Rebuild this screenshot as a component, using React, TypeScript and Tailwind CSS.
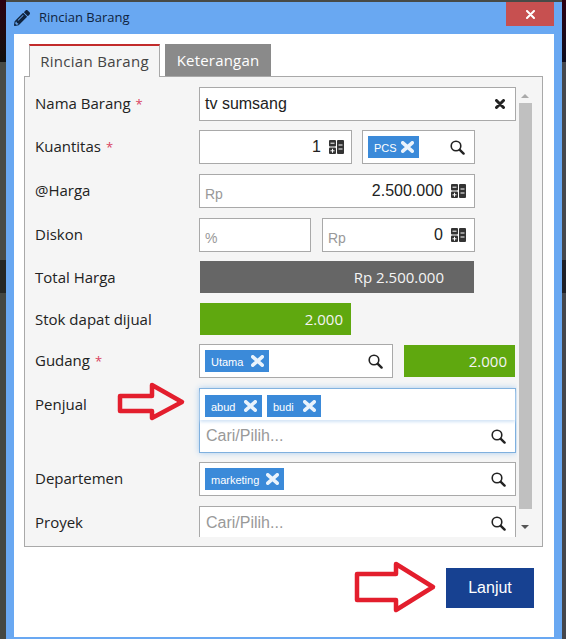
import React from "react";
import { FaPencilAlt } from "react-icons/fa";

const BOX = "h-[34px] border border-[#a9a9a9] bg-white flex items-center";

function Calc() {
  return (
    <svg width="15" height="14" viewBox="0 0 15 14" className="shrink-0">
      <rect x="0" y="0" width="7" height="6.5" rx="1" fill="#333" />
      <rect x="0" y="7.5" width="7" height="6.5" rx="1" fill="#333" />
      <rect x="8" y="0" width="7" height="14" rx="1" fill="#333" />
      <path d="M1.5 3.2h4M1.5 10.8h4M3.5 8.8v4M9.5 5h4M9.5 9h4" stroke="#fff" strokeWidth="1" />
    </svg>
  );
}

function Search() {
  return (
    <svg width="15" height="15" viewBox="0 0 15 15" className="shrink-0">
      <circle cx="6" cy="6" r="4.8" fill="none" stroke="#222" strokeWidth="1.6" />
      <path d="M9.8 9.8 13.6 13.6" stroke="#222" strokeWidth="2.4" strokeLinecap="round" />
    </svg>
  );
}

function Cross({ w, h, sw, color }: { w: number; h: number; sw: number; color: string }) {
  return (
    <svg width={w} height={h} viewBox={`0 0 ${w} ${h}`} className="shrink-0">
      <path d={`M${sw / 2} ${sw / 2}L${w - sw / 2} ${h - sw / 2}M${w - sw / 2} ${sw / 2}L${sw / 2} ${h - sw / 2}`} stroke={color} strokeWidth={sw} strokeLinecap="round" />
    </svg>
  );
}

function Tag({ children, className = "" }: { children: React.ReactNode; className?: string }) {
  return (
    <span className={`h-[22px] bg-[#3b8ad9] text-white text-[11px] flex items-center justify-between pl-[6px] pr-[5px] ${className}`}>
      <span className="pt-[2px]">{children}</span>
      <Cross w={13} h={12} sw={3.6} color="#eaf3fc" />
    </span>
  );
}

function Label({ children, req }: { children: React.ReactNode; req?: boolean }) {
  return (
    <div className="w-[174px] shrink-0 pl-[10px] font-['Open_Sans',sans-serif] text-[15px] leading-[32px] text-[#222]">
      {children}
      {req && <span className="text-[#d9435f] text-[13px] ml-[5px]">*</span>}
    </div>
  );
}

export default function App() {
  return (
    <div className="relative w-[566px] h-[639px] overflow-hidden bg-[#474a47] font-['Liberation_Sans',Arial,sans-serif] flex">
      {/* page behind the dialog */}
      <div className="w-[6px] shrink-0 flex flex-col">
        <div className="h-[62px] bg-gradient-to-b from-[#2c0012] to-[#101010]" />
        <div className="h-[198px] bg-[#484b47]" />
        <div className="h-[33px] bg-[#252725]" />
        <div className="flex-1 bg-[#444742]" />
      </div>

      <div className="w-[556px] shrink-0 mt-[2px] bg-[#69a8f2] px-[8px] pb-[2px] flex flex-col">
        {/* title bar */}
        <div className="h-[32px] shrink-0 flex items-start justify-between">
          <div className="flex items-center h-[32px] gap-[9px]">
            <FaPencilAlt className="w-[16px] h-[16px] text-[#10243f]" />
            <span className="font-['Open_Sans',sans-serif] text-[13px] text-[#10243f]">Rincian Barang</span>
          </div>
          <div className="w-[48px] h-[24px] bg-[#c75050] flex items-center justify-center">
            <Cross w={9} h={9} sw={2} color="#fff" />
          </div>
        </div>

        <div className="flex-1 bg-white pt-[10px] px-[10px] flex flex-col">
          {/* tabs */}
          <div className="flex pl-[5px] gap-[5px] items-start h-[33px] relative z-10 font-['Open_Sans',sans-serif] text-[15px]">
            <div className="w-[131px] h-[33px] bg-[#f5f5f5] border border-[#a9a9a9] border-b-0 border-t-2 border-t-[#c22b2b] flex items-center justify-center text-[#444] tracking-[0.3px]">
              Rincian Barang
            </div>
            <div className="w-[106px] h-[32px] bg-[#8a8a8a] flex items-center justify-center text-white font-medium tracking-[0.2px]">
              Keterangan
            </div>
          </div>

          {/* panel */}
          <div className="w-[519px] h-[471px] -mt-[1px] border border-[#a9a9a9] bg-[#f5f5f5] flex">
            <div className="w-[492px] h-[460px] overflow-hidden pt-[10px] flex flex-col">
              <div className="flex">
                <Label req>Nama Barang</Label>
                <div className={`${BOX} w-[317px] pl-[5px] pr-[10px] justify-between text-[16px] text-[#222]`}>
                  tv sumsang
                  <Cross w={10} h={10} sw={3} color="#222" />
                </div>
              </div>

              <div className="flex mt-[9px]">
                <Label req>Kuantitas</Label>
                <div className={`${BOX} w-[153px] pr-[7px] justify-end gap-[8px] text-[16px] text-[#222]`}>
                  1<Calc />
                </div>
                <div className={`${BOX} w-[113px] ml-[10px] pl-[5px] pr-[9px] justify-between`}>
                  <Tag className="w-[51px]">PCS</Tag>
                  <Search />
                </div>
              </div>

              <div className="flex mt-[10px]">
                <Label>@Harga</Label>
                <div className={`${BOX} w-[276px] pl-[5px] pr-[8px] justify-between text-[16px] text-[#222]`}>
                  <span className="text-[14px] text-[#999] pt-[6px]">Rp</span>
                  <span className="flex items-center gap-[8px]">2.500.000<Calc /></span>
                </div>
              </div>

              <div className="flex mt-[10px]">
                <Label>Diskon</Label>
                <div className={`${BOX} w-[112px] pl-[5px] text-[14px] text-[#999]`}>
                  <span className="pt-[6px]">%</span>
                </div>
                <div className={`${BOX} w-[153px] ml-[11px] pl-[5px] pr-[8px] justify-between text-[16px] text-[#222]`}>
                  <span className="text-[14px] text-[#999] pt-[6px]">Rp</span>
                  <span className="flex items-center gap-[8px]">0<Calc /></span>
                </div>
              </div>

              <div className="flex mt-[9px]">
                <Label>Total Harga</Label>
                <div className="w-[274px] h-[32px] ml-[1px] bg-[#666] text-[#f4f4f4] font-['Open_Sans',sans-serif] text-[15px] flex items-center justify-end pr-[30px]">
                  Rp 2.500.000
                </div>
              </div>

              <div className="flex mt-[10px]">
                <Label>Stok dapat dijual</Label>
                <div className="w-[151px] h-[32px] ml-[1px] bg-[#5fa80f] text-[#f4f4f4] font-['Open_Sans',sans-serif] text-[15px] flex items-center justify-end pr-[8px]">
                  2.000
                </div>
              </div>

              <div className="flex mt-[9px]">
                <Label req>Gudang</Label>
                <div className={`${BOX} w-[194px] pl-[5px] pr-[9px] justify-between`}>
                  <Tag className="w-[64px]">Utama</Tag>
                  <Search />
                </div>
                <div className="w-[111px] h-[32px] mt-[1px] ml-[11px] bg-[#5fa80f] text-[#f4f4f4] font-['Open_Sans',sans-serif] text-[15px] flex items-center justify-end pr-[8px]">
                  2.000
                </div>
              </div>

              <div className="flex mt-[10px]">
                <Label>Penjual</Label>
                <div className="w-[317px] h-[65px] border border-[#7fb0de] bg-white shadow-[0_0_6px_#a9cdf0] flex flex-col">
                  <div className="h-[31px] shrink-0 pl-[5px] pt-[6px] flex gap-[5px] shadow-[0_2px_3px_#d3e4f6]">
                    <Tag className="w-[57px]">abud</Tag>
                    <Tag className="w-[54px]">budi</Tag>
                  </div>
                  <div className="flex-1 pl-[6px] pr-[9px] flex items-center justify-between text-[16px] text-[#999]">
                    Cari/Pilih...
                    <Search />
                  </div>
                </div>
              </div>

              <div className="flex mt-[9px]">
                <Label>Departemen</Label>
                <div className={`${BOX} w-[317px] pl-[5px] pr-[9px] justify-between`}>
                  <Tag className="w-[79px]">marketing</Tag>
                  <Search />
                </div>
              </div>

              <div className="flex mt-[10px]">
                <Label>Proyek</Label>
                <div className={`${BOX} w-[317px] pl-[6px] pr-[9px] justify-between text-[16px] text-[#999]`}>
                  Cari/Pilih...
                  <Search />
                </div>
              </div>
            </div>

            {/* scrollbar */}
            <div className="w-[14px] ml-[1px] h-[456px] flex flex-col items-center">
              <div className="h-[26px] shrink-0 flex items-end pb-[5px]">
                <div className="w-0 h-0 border-x-[4px] border-x-transparent border-b-[4px] border-b-[#aaa]" />
              </div>
              <div className="w-[13px] h-[406px] shrink-0 bg-[#c0c0c0]" />
              <div className="flex-1 flex items-end pb-[4px]">
                <div className="w-0 h-0 border-x-[4px] border-x-transparent border-t-[4px] border-t-[#555]" />
              </div>
            </div>
          </div>

          {/* footer */}
          <div className="flex justify-end mt-[21px] pr-[10px]">
            <div className="w-[88px] h-[40px] bg-[#174191] text-white text-[16px] flex items-center justify-center">
              Lanjut
            </div>
          </div>
        </div>
      </div>

      <div className="w-[4px] shrink-0 flex flex-col">
        <div className="h-[62px] bg-gradient-to-b from-[#2c0012] to-[#0c0c20]" />
        <div className="h-[198px] bg-[#45474d]" />
        <div className="h-[33px] bg-[#1e2028]" />
        <div className="flex-1 bg-[#44464c]" />
      </div>

      {/* annotation arrows */}
      <svg className="absolute left-[115px] top-[380px]" width="74" height="44" viewBox="0 0 74 44" fill="none">
        <path d="M5 16H37V5L67 22L37 38V31H5Z" stroke="#e31e2d" strokeWidth="4.5" strokeLinejoin="round" />
      </svg>
      <svg className="absolute left-[352px] top-[558px]" width="88" height="58" viewBox="0 0 88 58" fill="none">
        <path d="M5 16H44V6L81 29L44 52V42H5Z" stroke="#e31e2d" strokeWidth="4.5" strokeLinejoin="round" />
      </svg>
    </div>
  );
}
